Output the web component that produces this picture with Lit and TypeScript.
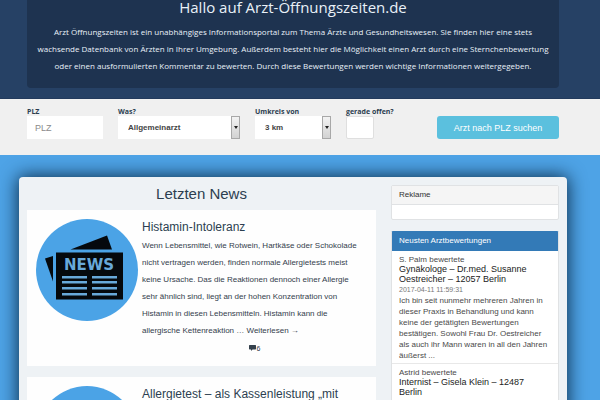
import { LitElement, html, css, svg } from "lit";
import { customElement, property } from "lit/decorators.js";

@customElement("news-icon")
class NewsIcon extends LitElement {
  static styles = css`
    :host { display: block; }
    .icon { display: block; width: 102px; height: 102px; }
    .disc { fill: #4ba3e6; }
    .ink { fill: #05090d; }
    .rule { fill: #68a9da; }
    .word { fill: #68a9da; font: bold 15px "DejaVu Sans", "Open Sans", sans-serif; }
  `;

  render() {
    const rows = [57, 62, 68, 74];
    return html`
      <svg class="icon" viewBox="0 0 102 102" role="img" aria-label="News">
        <circle class="disc" cx="51" cy="51" r="51"></circle>
        <path class="ink" d="M34.500 30.500 L71 16.500 L76 30.500 Z"></path>
        <path class="ink" d="M9 39.500 L17 37 V62.500 Z"></path>
        <rect class="ink" x="20" y="33.500" width="67" height="47"></rect>
        <text class="word" x="53" y="51" text-anchor="middle">NEWS</text>
        ${rows.map(
          (y) => svg`
            <rect class="rule" x="26" y=${y} width="25" height="2.500"></rect>
            <rect class="rule" x="56" y=${y} width="25" height="2.500"></rect>`
        )}
      </svg>
    `;
  }
}

@customElement("news-card")
class NewsCard extends LitElement {
  @property() heading = "";
  @property() text = "";
  @property({ type: Number }) comments = 0;

  static styles = css`
    :host {
      display: flex;
      gap: 4px;
      padding: 9px;
      background: #fefefe;
      color: #34404c;
    }
    .icon { flex: none; }
    .body { flex: 1; min-width: 0; }
    .heading { margin: 0; font-size: 12px; line-height: 16px; font-weight: 400; color: #2c3e50; }
    .text { margin: 0; padding: 2px 6px 0 0; font-size: 8px; line-height: 17px; }
    .more { color: inherit; text-decoration: none; }
    .comments {
      display: flex;
      justify-content: center;
      align-items: center;
      gap: 1px;
      height: 18px;
      font-size: 7px;
    }
    .bubble { width: 7px; height: 6px; fill: #34404c; }
  `;

  render() {
    return html`
      <news-icon class="icon"></news-icon>
      <div class="body">
        <h3 class="heading">${this.heading}</h3>
        <p class="text">${this.text} … <a class="more" href="#">Weiterlesen →</a></p>
        <div class="comments">
          <svg class="bubble" viewBox="0 0 7 6" aria-hidden="true">
            <path d="M0.500 0 H6.500 L7 0.500 V4 L6.500 4.500 H3.500 L2 6 V4.500 H0.500 L0 4 V0.500 Z"></path>
          </svg>
          <span>${this.comments}</span>
        </div>
      </div>
    `;
  }
}

interface Review {
  author: string;
  doctor: string;
  date: string;
  text: string;
}

const reviews: Review[] = [
  {
    author: "S. Palm",
    doctor: "Gynäkologe – Dr.med. Susanne Oestreicher – 12057 Berlin",
    date: "2017-04-11 11:59:31",
    text: "Ich bin seit nunmehr mehreren Jahren in dieser Praxis in Behandlung und kann keine der getätigten Bewertungen bestätigen. Sowohl Frau Dr. Oestreicher als auch ihr Mann waren in all den Jahren äußerst ...",
  },
  {
    author: "Astrid",
    doctor: "Internist – Gisela Klein – 12487 Berlin",
    date: "2017-04-11",
    text: "",
  },
];

@customElement("app-root")
class AppRoot extends LitElement {
  static styles = css`
    :host {
      display: flex;
      flex-direction: column;
      height: 100vh;
      overflow: hidden;
      background: #4ea3e6;
      font-family: "Liberation Sans", Arial, sans-serif;
      color: #2c3e50;
    }
    *, *::before, *::after { box-sizing: border-box; }

    .hero { flex: none; padding: 0 41px 10px 27px; background: #264165; border-bottom: 1px solid #223a5c; }
    .intro {
      padding: 0 6px 14px;
      border-radius: 0 0 4px 4px;
      background: #1e3350;
      color: #e9f1f8;
      font-family: "Open Sans", sans-serif;
      text-align: center;
    }
    .title { margin: 0; font-size: 15px; line-height: 14px; font-weight: 400; }
    .lead { margin: 0; padding-top: 9px; font-size: 8px; line-height: 17px; }

    .search {
      flex: none;
      display: flex;
      align-items: flex-end;
      gap: 15px;
      padding: 8px 41px 16px 27px;
      background: #f0f0f0;
    }
    .field { display: flex; flex-direction: column; }
    .zip { width: 76px; }
    .what { width: 122px; }
    .radius { width: 76px; }
    .open { width: 60px; }
    .label {
      font: bold 7px/9px "Open Sans", sans-serif;
      white-space: nowrap;
      color: #2c3e50;
    }
    .control {
      display: block;
      width: 100%;
      height: 23px;
      margin: 0;
      padding: 0 8px;
      border: 0;
      border-radius: 0;
      appearance: none;
      background: #fff;
      color: #444;
      font: 9px "Liberation Sans", Arial, sans-serif;
    }
    .control::placeholder { color: #8a8a8a; opacity: 1; }
    .choice { padding: 0 10px; font-size: 8px; font-weight: 700; }
    .picker { position: relative; }
    .picker::before {
      content: "";
      position: absolute;
      inset: 0 0 0 auto;
      width: 9px;
      border: 1px solid #a8a8a8;
      background: linear-gradient(#f3f3f3, #d2d2d2);
      pointer-events: none;
    }
    .picker::after {
      content: "";
      position: absolute;
      top: 10px;
      right: 2px;
      border: solid transparent;
      border-width: 3px 2px 0;
      border-top-color: #222;
      pointer-events: none;
    }
    .tick {
      width: 28px;
      height: 23px;
      margin: 0;
      appearance: none;
      border: 1px solid #dfdfdf;
      border-radius: 2px;
      background: #fff;
    }
    .submit {
      width: 122px;
      height: 23px;
      margin-left: auto;
      padding: 0;
      border: 0;
      border-radius: 3px;
      background: #5bc0de;
      color: #fff;
      font: 9px "Liberation Sans", Arial, sans-serif;
    }

    .stage { flex: 1 0 auto; padding: 22px 33px 0 19px; overflow: hidden; }
    .panel {
      display: flex;
      align-items: flex-start;
      gap: 15px;
      padding: 8px 8px 22px;
      border-radius: 4px 4px 0 0;
      background: #eef2f5;
      box-shadow: 0 0 18px 1px #0c2c48;
    }
    .news { flex: 1; min-width: 0; display: flex; flex-direction: column; gap: 11px; }
    .section {
      margin: 0 0 -4px;
      font-size: 15px;
      line-height: 18px;
      font-weight: 400;
      text-align: center;
    }

    .side { flex: none; width: 168px; display: flex; flex-direction: column; gap: 11px; font-size: 8px; color: #4a4a4a; }
    .box { border: 1px solid #e0e2e4; border-radius: 2px; background: #fff; }
    .boxhead { margin: 0; padding: 0 7px; font-size: 8px; line-height: 18px; font-weight: 400; background: #f5f5f5; border-bottom: 1px solid #e0e2e4; color: #333; }
    .primary { background: #337ab7; border-color: #337ab7; color: #fff; }
    .highlight { border-color: #337ab7 #e0e2e4 #e0e2e4; }
    .ad { height: 14px; }
    .review { padding: 5px 7px 2px; border-bottom: 1px solid #e8e8e8; }
    .author { margin: 0; line-height: 8px; }
    .doctor { display: block; padding-right: 4px; font-size: 9px; line-height: 10px; color: #222; text-decoration: none; }
    .date { display: block; font-size: 7px; line-height: 11px; color: #777; }
    .comment { margin: 0; font-size: 8px; line-height: 11px; }
  `;

  render() {
    return html`
      <header class="hero">
        <div class="intro">
          <h1 class="title">Hallo auf Arzt-Öffnungszeiten.de</h1>
          <p class="lead">
            Arzt Öffnungszeiten ist ein unabhängiges Informationsportal zum Thema Ärzte und Gesundheitswesen. Sie finden hier eine stets
            wachsende Datenbank von Ärzten in Ihrer Umgebung. Außerdem besteht hier die Möglichkeit einen Arzt durch eine Sternchenbewertung
            oder einen ausformulierten Kommentar zu bewerten. Durch diese Bewertungen werden wichtige Informationen weitergegeben.
          </p>
        </div>
      </header>

      <form class="search" @submit=${(e: Event) => e.preventDefault()}>
        <div class="field zip">
          <label class="label" for="plz">PLZ</label>
          <input class="control" id="plz" type="text" placeholder="PLZ" />
        </div>
        <div class="field what">
          <label class="label" for="was">Was?</label>
          <div class="picker">
            <select class="control choice" id="was"><option>Allgemeinarzt</option></select>
          </div>
        </div>
        <div class="field radius">
          <label class="label" for="umkreis">Umkreis von</label>
          <div class="picker">
            <select class="control choice" id="umkreis"><option>3 km</option></select>
          </div>
        </div>
        <div class="field open">
          <label class="label" for="offen">gerade offen?</label>
          <input class="tick" id="offen" type="checkbox" />
        </div>
        <button class="submit" type="submit">Arzt nach PLZ suchen</button>
      </form>

      <main class="stage">
        <div class="panel">
          <section class="news">
            <h2 class="section">Letzten News</h2>
            <news-card
              heading="Histamin-Intoleranz"
              text="Wenn Lebensmittel, wie Rotwein, Hartkäse oder Schokolade nicht vertragen werden, finden normale Allergietests meist keine Ursache. Das die Reaktionen dennoch einer Allergie sehr ähnlich sind, liegt an der hohen Konzentration von Histamin in diesen Lebensmitteln. Histamin kann die allergische Kettenreaktion"
              comments="6"
            ></news-card>
            <news-card heading="Allergietest – als Kassenleistung „mit"></news-card>
          </section>
          <aside class="side">
            <section class="box">
              <h2 class="boxhead">Reklame</h2>
              <div class="ad"></div>
            </section>
            <section class="box highlight">
              <h2 class="boxhead primary">Neusten Arztbewertungen</h2>
              ${reviews.map(
                (r) => html`
                  <article class="review">
                    <p class="author">${r.author} bewertete</p>
                    <a class="doctor" href="#">${r.doctor}</a>
                    <time class="date">${r.date}</time>
                    <p class="comment">${r.text}</p>
                  </article>
                `
              )}
            </section>
          </aside>
        </div>
      </main>
    `;
  }
}
